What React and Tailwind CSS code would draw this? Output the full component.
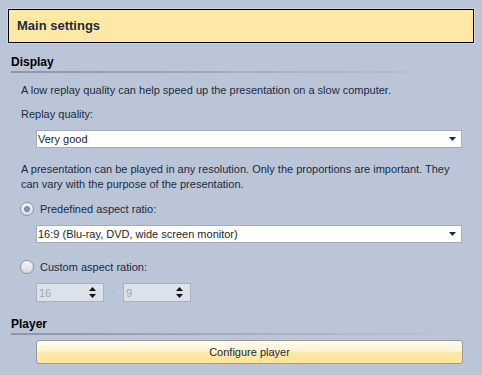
import React from "react";

function Caret() {
  return (
    <svg width="7" height="4" viewBox="0 0 7 4" className="block">
      <path d="M0 0 H7 L3.5 4 Z" fill="#1b2a3f" />
    </svg>
  );
}

function Spin() {
  return (
    <svg width="7" height="11" viewBox="0 0 7 11" className="block">
      <path d="M3.5 0 L7 4 H0 Z" fill="#111" />
      <path d="M0 7 H7 L3.5 11 Z" fill="#111" />
    </svg>
  );
}

function Select({ value }) {
  return (
    <div className="ml-[36px] mr-[20px] h-[18px] bg-white border border-[#a5acb5] flex items-center pl-[1px] pr-[5px]">
      <span className="flex-1 text-[#1e1e1e]">{value}</span>
      <Caret />
    </div>
  );
}

function Section({ title }) {
  return (
    <div className="ml-[11px] mr-[16px]">
      <div className="font-bold text-[12px] text-black leading-[14px]">{title}</div>
      <div className="mt-[2px] h-[2px] bg-gradient-to-r from-[#8d96a3] via-[#a4aebc] to-[#bac6d8]" />
    </div>
  );
}

function Radio({ checked, label }) {
  return (
    <div className="flex items-center ml-[20px] gap-[6px]">
      <div className="w-[14px] h-[14px] rounded-full border border-[#8e949c] bg-gradient-to-b from-[#f4f4f4] to-[#d7dce3] flex items-center justify-center">
        {checked && <div className="w-[6px] h-[6px] rounded-full bg-[#8a9ab0] border border-[#6f7e92]" />}
      </div>
      <span className="text-[#1b2a3f]">{label}</span>
    </div>
  );
}

function Spinner({ value }) {
  return (
    <div className="w-[68px] h-[19px] bg-[#dde2ea] border border-[#a9b1bc] flex items-center pl-[2px] pr-[7px]">
      <span className="flex-1 text-[#a0a6ae]">{value}</span>
      <Spin />
    </div>
  );
}

export default function App() {
  return (
    <div
      className="w-[482px] h-[375px] bg-[#bac6d8] overflow-hidden text-[11px] leading-[14px]"
      style={{ fontFamily: "'Liberation Sans', Arial, sans-serif" }}
    >
      <div className="pt-[8px] px-[7px]">
        <div className="border border-[#cdd5e0]">
          <div className="h-[34px] bg-[#ffe8a6] border border-black flex items-center pl-[8px]">
            <span className="font-bold text-[13px] text-[#1e2a3a]">Main settings</span>
          </div>
        </div>
      </div>
      <div className="mt-[11px]">
        <Section title="Display" />
      </div>
      <div className="ml-[21px] mt-[10px] text-[#1b2a3f]">A low replay quality can help speed up the presentation on a slow computer.</div>
      <div className="ml-[21px] mt-[10px] text-[#1b2a3f]">Replay quality:</div>
      <div className="mt-[9px]"><Select value="Very good" /></div>
      <div className="ml-[21px] mt-[14px] text-[#1b2a3f] leading-[15px] whitespace-nowrap">
        A presentation can be played in any resolution. Only the proportions are important. They
        <br />
        can vary with the purpose of the presentation.
      </div>
      <div className="mt-[10px]"><Radio checked label="Predefined aspect ratio:" /></div>
      <div className="mt-[9px]"><Select value="16:9 (Blu-ray, DVD, wide screen monitor)" /></div>
      <div className="mt-[17px]"><Radio label="Custom aspect ration:" /></div>
      <div className="mt-[9px] ml-[36px] flex items-center">
        <Spinner value="16" />
        <span className="w-[19px] text-center text-[#a0a6ae]">:</span>
        <Spinner value="9" />
      </div>
      <div className="mt-[15px]">
        <Section title="Player" />
      </div>
      <div className="ml-[36px] mr-[19px] mt-[5px] h-[24px] rounded-[3px] border border-[#9a9a96] bg-[linear-gradient(to_bottom,#fffbee_0%,#fff3d2_45%,#ffe7a4_55%,#ffe49c_100%)] flex items-center justify-center text-[#1b2a3f]">
        Configure player
      </div>
    </div>
  );
}
